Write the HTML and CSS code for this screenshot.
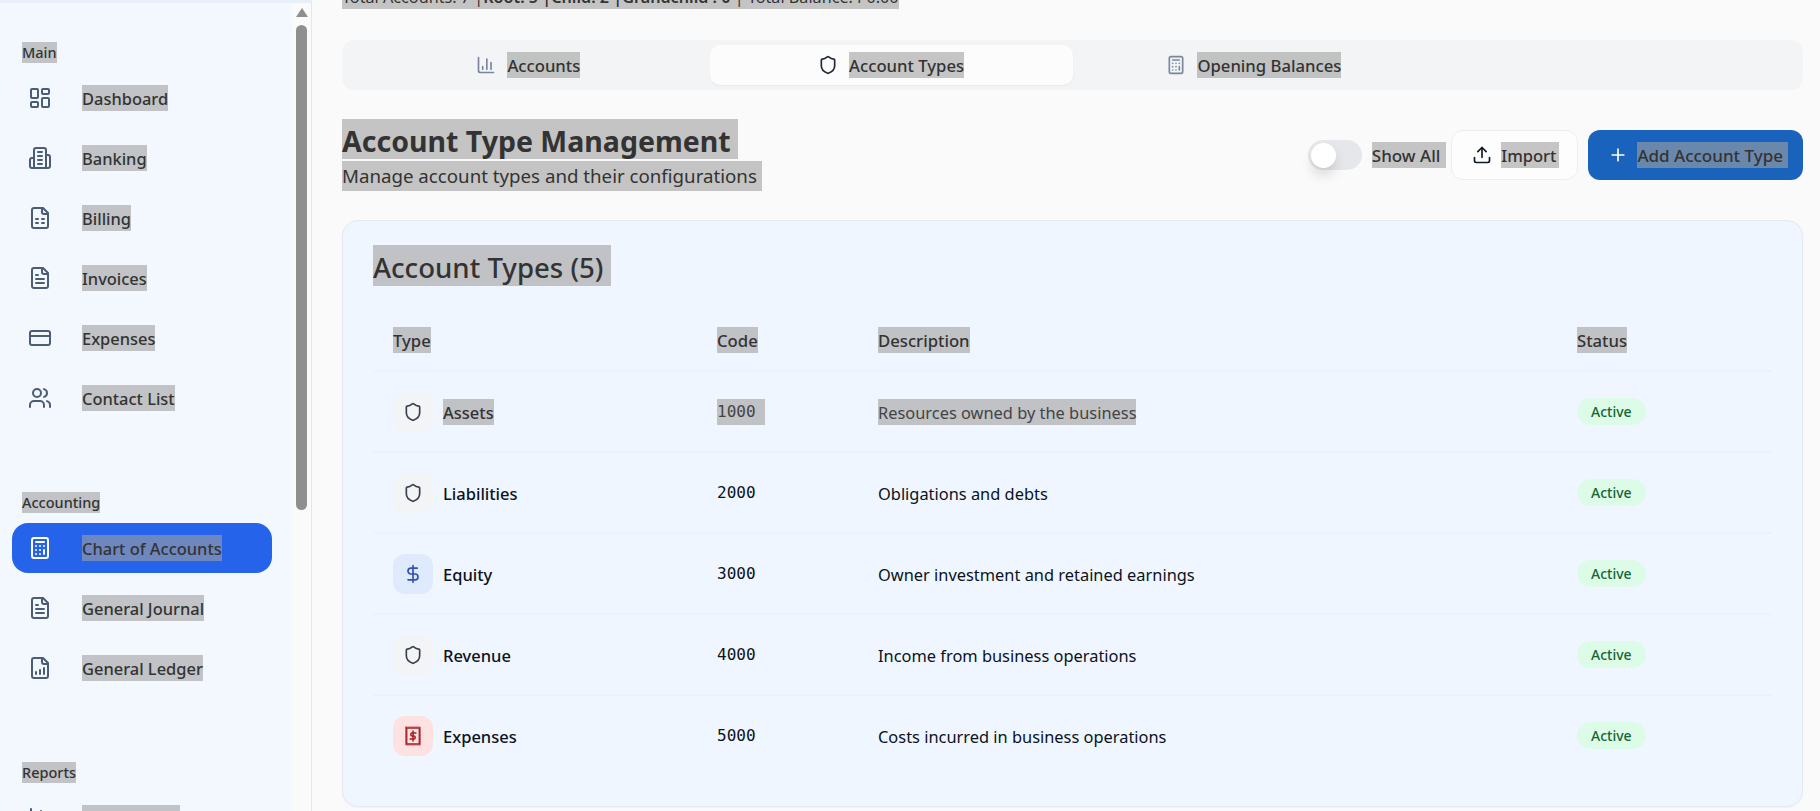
FILE: index.html
```html
<!DOCTYPE html>
<html lang="en">
<head>
<meta charset="utf-8">
<title>Account Type Management</title>
<link rel="stylesheet" href="styles.css">
</head>
<body>
<svg class="defs" width="0" height="0" aria-hidden="true">
  <symbol id="i-dash" viewBox="0 0 24 24"><rect x="3" y="3" width="7" height="9" rx="1"/><rect x="14" y="3" width="7" height="5" rx="1"/><rect x="14" y="12" width="7" height="9" rx="1"/><rect x="3" y="16" width="7" height="5" rx="1"/></symbol>
  <symbol id="i-bank" viewBox="0 0 24 24"><path d="M6 22V4a2 2 0 0 1 2-2h8a2 2 0 0 1 2 2v18Z"/><path d="M6 12H4a2 2 0 0 0-2 2v6a2 2 0 0 0 2 2h2"/><path d="M18 9h2a2 2 0 0 1 2 2v9a2 2 0 0 1-2 2h-2"/><path d="M10 6h4M10 10h4M10 14h4M10 18h4"/></symbol>
  <symbol id="i-sheet" viewBox="0 0 24 24"><path d="M15 2H6a2 2 0 0 0-2 2v16a2 2 0 0 0 2 2h12a2 2 0 0 0 2-2V7Z"/><path d="M14 2v4a2 2 0 0 0 2 2h4"/><path d="M8 13h2M14 13h2M8 17h2M14 17h2"/></symbol>
  <symbol id="i-file" viewBox="0 0 24 24"><path d="M15 2H6a2 2 0 0 0-2 2v16a2 2 0 0 0 2 2h12a2 2 0 0 0 2-2V7Z"/><path d="M14 2v4a2 2 0 0 0 2 2h4"/><path d="M10 9H8M16 13H8M16 17H8"/></symbol>
  <symbol id="i-card" viewBox="0 0 24 24"><rect x="2" y="5" width="20" height="14" rx="2"/><path d="M2 10h20"/></symbol>
  <symbol id="i-users" viewBox="0 0 24 24"><path d="M16 21v-2a4 4 0 0 0-4-4H6a4 4 0 0 0-4 4v2"/><circle cx="9" cy="7" r="4"/><path d="M22 21v-2a4 4 0 0 0-3-3.87"/><path d="M16 3.13a4 4 0 0 1 0 7.75"/></symbol>
  <symbol id="i-calc" viewBox="0 0 24 24"><rect x="4" y="2" width="16" height="20" rx="2"/><path d="M8 6h8M16 14v4M16 10h.01M12 10h.01M8 10h.01M12 14h.01M8 14h.01M12 18h.01M8 18h.01"/></symbol>
  <symbol id="i-ledger" viewBox="0 0 24 24"><path d="M15 2H6a2 2 0 0 0-2 2v16a2 2 0 0 0 2 2h12a2 2 0 0 0 2-2V7Z"/><path d="M14 2v4a2 2 0 0 0 2 2h4"/><path d="M8 18v-2M12 18v-4M16 18v-6"/></symbol>
  <symbol id="i-chart" viewBox="0 0 24 24"><path d="M3 3v16a2 2 0 0 0 2 2h16"/><path d="M18 17V9M13 17V5M8 17v-3"/></symbol>
  <symbol id="i-shield" viewBox="0 0 24 24"><path d="M20 13c0 5-3.5 7.5-7.66 8.95a1 1 0 0 1-.67-.01C7.5 20.5 4 18 4 13V6a1 1 0 0 1 1-1c2 0 4.5-1.2 6.24-2.72a1.17 1.17 0 0 1 1.52 0C14.51 3.81 17 5 19 5a1 1 0 0 1 1 1z"/></symbol>
  <symbol id="i-upload" viewBox="0 0 24 24"><path d="M21 15v4a2 2 0 0 1-2 2H5a2 2 0 0 1-2-2v-4"/><path d="M17 8l-5-5-5 5"/><path d="M12 3v12"/></symbol>
  <symbol id="i-plus" viewBox="0 0 24 24"><path d="M5 12h14M12 5v14"/></symbol>
  <symbol id="i-dollar" viewBox="0 0 24 24"><path d="M12 2v20"/><path d="M17 5H9.5a3.5 3.5 0 0 0 0 7h5a3.5 3.5 0 0 1 0 7H6"/></symbol>
  <symbol id="i-receipt" viewBox="0 0 24 24"><rect x="4.5" y="2.5" width="15" height="19" stroke-width="1.6"/><rect x="3.4" y="1.4" width="17.2" height="21.2" stroke-width="1.2" stroke-dasharray="1.4 1"/><path d="M12 6v12" stroke-width="1.8"/><path d="M15.5 8.5H10.7a1.8 1.8 0 0 0 0 3.5h2.6a1.8 1.8 0 0 1 0 3.5H8.5" stroke-width="1.8"/></symbol>
</svg>

<div class="app">
  <aside class="sidebar">
    <nav class="nav">
      <section class="group">
        <h2 class="group-title"><span class="sel">Main</span></h2>
        <a class="item"><svg class="icon-nav"><use href="#i-dash"/></svg><span class="sel item-text">Dashboard</span></a>
        <a class="item"><svg class="icon-nav"><use href="#i-bank"/></svg><span class="sel item-text">Banking</span></a>
        <a class="item"><svg class="icon-nav"><use href="#i-sheet"/></svg><span class="sel item-text">Billing</span></a>
        <a class="item"><svg class="icon-nav"><use href="#i-file"/></svg><span class="sel item-text">Invoices</span></a>
        <a class="item"><svg class="icon-nav"><use href="#i-card"/></svg><span class="sel item-text">Expenses</span></a>
        <a class="item"><svg class="icon-nav"><use href="#i-users"/></svg><span class="sel item-text">Contact List</span></a>
      </section>
      <section class="group">
        <h2 class="group-title"><span class="sel">Accounting</span></h2>
        <a class="item item-active"><svg class="icon-nav"><use href="#i-calc"/></svg><span class="sel item-text">Chart of Accounts</span></a>
        <a class="item"><svg class="icon-nav"><use href="#i-file"/></svg><span class="sel item-text">General Journal</span></a>
        <a class="item"><svg class="icon-nav"><use href="#i-ledger"/></svg><span class="sel item-text">General Ledger</span></a>
      </section>
      <section class="group">
        <h2 class="group-title"><span class="sel">Reports</span></h2>
        <a class="item"><svg class="icon-nav"><use href="#i-chart"/></svg><span class="sel item-text">Reports Hub</span></a>
      </section>
    </nav>
    <div class="rail">
      <span class="rail-arrow"></span>
      <span class="rail-thumb"></span>
    </div>
  </aside>

  <main class="main">
    <p class="summary"><span class="sel">Total Accounts: 7 |<b>Root: 5 |Child: 2 |Grandchild : 0</b> | Total Balance: ₱0.00</span></p>

    <div class="tabs">
      <button class="tab"><svg class="icon-tab muted"><use href="#i-chart"/></svg><span class="sel tab-text">Accounts</span></button>
      <button class="tab tab-active"><svg class="icon-tab"><use href="#i-shield"/></svg><span class="sel tab-text">Account Types</span></button>
      <button class="tab"><svg class="icon-tab muted"><use href="#i-calc"/></svg><span class="sel tab-text">Opening Balances</span></button>
    </div>

    <header class="head">
      <div class="head-text">
        <h1 class="title"><span class="sel">Account Type Management&nbsp;</span></h1>
        <p class="subtitle"><span class="sel">Manage account types and their configurations&nbsp;</span></p>
      </div>
      <div class="actions">
        <span class="toggle"><span class="knob"></span></span>
        <span class="sel show-all">Show All</span>
        <button class="btn btn-light"><svg class="icon-btn"><use href="#i-upload"/></svg><span class="sel">Import</span></button>
        <button class="btn btn-primary"><svg class="icon-btn"><use href="#i-plus"/></svg><span class="sel">Add Account Type</span></button>
      </div>
    </header>

    <section class="card">
      <h2 class="card-title"><span class="sel">Account Types (5)&nbsp;</span></h2>
      <div class="table">
        <div class="row row-head">
          <div class="cell"><span class="sel">Type</span></div>
          <div class="cell"><span class="sel">Code</span></div>
          <div class="cell"><span class="sel">Description</span></div>
          <div class="cell"><span class="sel">Status</span></div>
        </div>
        <div class="row">
          <div class="cell type"><span class="tile tile-gray"><svg class="icon-tab"><use href="#i-shield"/></svg></span><span class="sel name">Assets</span></div>
          <div class="cell"><span class="sel code">1000 </span></div>
          <div class="cell"><span class="sel desc">Resources owned by the business</span></div>
          <div class="cell"><span class="badge">Active</span></div>
        </div>
        <div class="row">
          <div class="cell type"><span class="tile tile-gray"><svg class="icon-tab"><use href="#i-shield"/></svg></span><span class="name">Liabilities</span></div>
          <div class="cell"><span class="code">2000</span></div>
          <div class="cell"><span class="desc">Obligations and debts</span></div>
          <div class="cell"><span class="badge">Active</span></div>
        </div>
        <div class="row">
          <div class="cell type"><span class="tile tile-blue"><svg class="icon-tab"><use href="#i-dollar"/></svg></span><span class="name">Equity</span></div>
          <div class="cell"><span class="code">3000</span></div>
          <div class="cell"><span class="desc">Owner investment and retained earnings</span></div>
          <div class="cell"><span class="badge">Active</span></div>
        </div>
        <div class="row">
          <div class="cell type"><span class="tile tile-gray"><svg class="icon-tab"><use href="#i-shield"/></svg></span><span class="name">Revenue</span></div>
          <div class="cell"><span class="code">4000</span></div>
          <div class="cell"><span class="desc">Income from business operations</span></div>
          <div class="cell"><span class="badge">Active</span></div>
        </div>
        <div class="row">
          <div class="cell type"><span class="tile tile-red"><svg class="icon-tab"><use href="#i-receipt"/></svg></span><span class="name">Expenses</span></div>
          <div class="cell"><span class="code">5000</span></div>
          <div class="cell"><span class="desc">Costs incurred in business operations</span></div>
          <div class="cell"><span class="badge">Active</span></div>
        </div>
      </div>
    </section>
  </main>
</div>
</body>
</html>
```

FILE: styles.css
```css
* { box-sizing: border-box; }

html, body {
  margin: 0;
  height: 811px;
  overflow: hidden;
}

body {
  font-family: "Noto Sans", "Liberation Sans", sans-serif;
  font-size: 16px;
  color: #0f172a;
  background: #fafafa;
}

.defs { display: block; height: 0; }

svg {
  fill: none;
  stroke: currentColor;
  stroke-width: 2;
  stroke-linecap: round;
  stroke-linejoin: round;
  flex: none;
}

/* Inactive text-selection tint seen all over the reference */
.sel {
  display: inline-block;
  background: rgba(160, 160, 160, 0.6);
  color: #333;
  line-height: 26px;
}

.app {
  display: flex;
  height: 811px;
  overflow: hidden;
}

/* Sidebar */
.sidebar {
  display: flex;
  width: 312px;
  flex: none;
  height: 811px;
  overflow: hidden;
  border-right: 1px solid #e5e7eb;
  border-top: 3px solid #e9eff8;
  background: #fafafa;
}

.nav {
  width: 292px;
  flex: none;
  padding: 39px 20px 0 12px;
  background: #f3f8ff;
}

.group { margin-bottom: 69px; }

.group-title {
  margin: 0 0 10px;
  padding-left: 10px;
  font-size: 14.5px;
  font-weight: 500;
  line-height: 20px;
}

.group-title .sel { line-height: 21px; }

.item {
  display: flex;
  align-items: center;
  gap: 30px;
  height: 50px;
  margin-bottom: 10px;
  padding-left: 16px;
  border-radius: 16px;
  color: #4b5d75;
}

.group .item:last-child { margin-bottom: 0; }

.item-active {
  background: #2563eb;
  color: #fff;
}

.icon-nav { width: 24px; height: 24px; }

.item-text {
  font-size: 16.45px;
  font-weight: 500;
  padding-top: 2px;
  line-height: 24px;
}

.rail {
  flex: 1;
  display: flex;
  flex-direction: column;
  align-items: center;
  padding-top: 5px;
  background: #fafafa;
}

.rail-arrow {
  width: 0;
  height: 0;
  border-left: 6px solid transparent;
  border-right: 6px solid transparent;
  border-bottom: 9px solid #8f8f8f;
}

.rail-thumb {
  width: 11px;
  height: 485px;
  margin-top: 8px;
  border-radius: 6px;
  background: #8f8f8f;
}

/* Main column */
.main {
  flex: 1;
  min-width: 0;
  height: 811px;
  overflow: hidden;
  padding: 0 17px 0 30px;
}

.summary {
  margin: -17px 0 0;
  font-size: 16.2px;
}

.summary .sel { padding-top: 2px; line-height: 24px; }

.summary b { font-weight: 600; }

.tabs {
  display: grid;
  grid-template-columns: repeat(4, 1fr);
  height: 50px;
  margin-top: 31px;
  padding: 5px;
  border-radius: 12px;
  background: #f3f4f6;
}

.tab {
  display: flex;
  align-items: center;
  justify-content: center;
  gap: 11px;
  border: 0;
  border-radius: 10px;
  background: transparent;
  font: inherit;
  color: #1f2937;
}

.tab-active {
  background: #fcfcfc;
  box-shadow: 0 1px 2px rgba(0, 0, 0, 0.05);
}

.tab-text {
  font-size: 16.7px;
  font-weight: 500;
  padding-top: 2px;
  line-height: 24px;
}

.icon-tab { width: 20px; height: 20px; }

.muted { color: #7a8699; }

.head {
  display: flex;
  justify-content: space-between;
  align-items: center;
  margin-top: 30px;
  height: 70px;
}

.title {
  margin: 0;
  font-size: 28.5px;
  font-weight: 700;
  line-height: 40px;
}

.title .sel { padding-top: 4px; line-height: 36px; }

.subtitle {
  margin: 0;
  font-size: 18.7px;
}

.subtitle .sel { line-height: 30px; }

.head-text { display: flex; flex-direction: column; align-items: flex-start; }

.actions {
  display: flex;
  align-items: center;
}

.toggle {
  display: flex;
  align-items: center;
  width: 54px;
  height: 30px;
  padding: 0 3px;
  border-radius: 15px;
  background: #e5e7eb;
}

.knob {
  width: 25px;
  height: 25px;
  border-radius: 50%;
  background: #fff;
  box-shadow: 0 8px 12px rgba(0, 0, 0, 0.12);
}

.show-all {
  margin-left: 10px;
  padding: 2px 6px 0 0;
  font-size: 17px;
  font-weight: 500;
  line-height: 24px;
}

.btn {
  display: flex;
  align-items: center;
  gap: 9px;
  height: 50px;
  border-radius: 12px;
  font: inherit;
  font-weight: 500;
}

.btn .sel {
  padding-top: 2px;
  line-height: 24px;
}

.btn-light {
  margin-left: 5px;
  padding: 0 18px 0 20px;
  border: 1px solid #eeeef2;
  background: #fdfdfd;
  color: #111827;
}

.btn-light .sel { padding-right: 3px; font-size: 16.5px; }

.btn-primary {
  margin-left: 10px;
  padding: 0 15px 0 20px;
  border: 0;
  background: #1a63bd;
  color: #fff;
}

.btn-primary .sel { padding-right: 5px; font-size: 17px; }

.icon-btn { width: 20px; height: 20px; }

/* Card + table */
.card {
  height: 587px;
  margin-top: 30px;
  padding: 24px 30px 0;
  border: 1px solid #e5e9f0;
  border-radius: 16px;
  background: #eff6ff;
  box-shadow: 0 1px 2px rgba(0, 0, 0, 0.04);
}

.card-title {
  margin: 0;
  font-size: 27.6px;
  font-weight: 500;
}

.card-title .sel { padding-top: 4px; line-height: 37px; }

.table { margin-top: 41px; }

.row {
  display: grid;
  grid-template-columns: 324px 161px 699px 1fr;
  align-items: center;
  height: 81px;
  border-bottom: 2px solid #eef1f6;
}

.row:last-child { border-bottom-color: transparent; }

.row-head {
  height: 45px;
  padding-bottom: 17px;
  font-size: 16.7px;
  font-weight: 500;
}

.row-head .sel { padding-top: 2px; line-height: 24px; }

.cell {
  display: flex;
  align-items: center;
  padding-left: 20px;
}

.type { gap: 10px; }

.tile {
  display: flex;
  align-items: center;
  justify-content: center;
  width: 40px;
  height: 40px;
  border-radius: 12px;
}

.tile-gray { background: #f3f4f6; color: #374151; }
.tile-blue { background: #dfeafd; color: #3150b8; }
.tile-red { background: #fee2e2; color: #a61e24; }

.name {
  padding-top: 1px;
  font-size: 16.5px;
  font-weight: 500;
  color: #0b1220;
  line-height: 25px;
}
.name.sel { color: #333; }

.code {
  font-family: "DejaVu Sans Mono", "Liberation Mono", monospace;
  font-size: 16px;
  color: #0b1220;
  line-height: 26px;
  white-space: pre;
}
.code.sel { color: #444; }

.desc {
  padding-top: 1px;
  font-size: 16.4px;
  color: #0b1220;
  line-height: 25px;
}
.desc.sel { color: #444; }

.badge {
  display: inline-block;
  padding: 0 14px;
  height: 27px;
  border-radius: 14px;
  background: #dcfce7;
  color: #166534;
  font-size: 14px;
  font-weight: 500;
  line-height: 28px;
}
```
